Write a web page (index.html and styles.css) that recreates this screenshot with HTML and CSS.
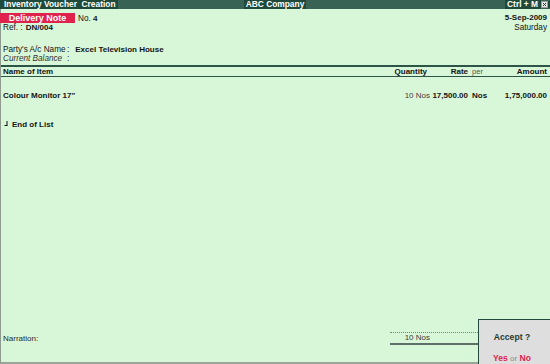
FILE: index.html
```
<!DOCTYPE html>
<html lang="en">
<head>
    <meta charset="UTF-8">
    <title>Inventory Voucher Creation</title>
    <link rel="stylesheet" href="styles.css">
</head>
<body>
    <div class="screen">
        <!-- title bar -->
        <div class="titlebar">
            <div class="tb-left"><span class="title">Inventory Voucher&nbsp; Creation</span></div>
            <span class="company">ABC Company</span>
            <div class="tb-right">
                <span class="keys">Ctrl + M</span>
                <span class="close">
                    <svg width="7" height="7" viewBox="0 0 7 7"><rect x="0.5" y="0.5" width="6" height="6" fill="#e8e8e8" stroke="#9a9a9a"/><path d="M2 2 L5 5 M5 2 L2 5" stroke="#213f33" stroke-width="1"/></svg>
                </span>
            </div>
        </div>

        <div class="voucher">
            <!-- voucher head -->
            <div class="head">
                <div class="head-left">
                    <div class="line"><span class="vtype">Delivery Note</span><span class="lbl">No.</span> <b>4</b></div>
                    <div class="line ref"><span class="lbl">Ref. :</span> <b>DN/004</b></div>
                </div>
                <div class="head-right">
                    <div class="line"><b>5-Sep-2009</b></div>
                    <div class="line"><span class="lbl">Saturday</span></div>
                </div>
            </div>

            <div class="party">
                <div class="pline"><span class="lbl plabel">Party's A/c Name</span><span class="lbl colon">:</span><b>Excel Television House</b></div>
                <div class="pline"><i class="lbl plabel">Current Balance</i><span class="lbl colon">:</span></div>
            </div>

            <!-- item table -->
            <div class="grid cols-head">
                <span>Name of Item</span>
                <span class="num qty-h">Quantity</span>
                <span class="num">Rate</span>
                <span class="per lbl">per</span>
                <span class="num">Amount</span>
            </div>

            <div class="grid item-row">
                <b>Colour Monitor 17"</b>
                <span class="num qty">10 Nos</span>
                <b class="num">17,500.00</b>
                <b class="per">Nos</b>
                <b class="num">1,75,000.00</b>
            </div>

            <div class="eol">
                <svg width="4" height="5" viewBox="0 0 4 5"><path d="M3 0 V4.5 M0.5 4.5 H3.5" stroke="#111" stroke-width="1"/></svg>
                <b>End of List</b>
            </div>

            <div class="spacer"></div>

            <div class="footer">
                <span class="narr">Narration:</span>
                <div class="total">10 Nos</div>
            </div>
        </div>

        <!-- accept prompt -->
        <div class="accept">
            <div class="ask">Accept ?</div>
            <div class="yn"><b class="red">Yes</b> <span class="or">or</span> <b class="red">No</b></div>
        </div>
    </div>
</body>
</html>
```

FILE: styles.css
```
body {
    margin: 0;
    padding: 0;
    font-family: "Liberation Sans", Arial, sans-serif;
    font-size: 8px;
    color: #141414;
}
.screen {
    position: relative;
    width: 550px;
    height: 364px;
    display: flex;
    flex-direction: column;
    background: #d8f6d8;
    overflow: hidden;
}
b {
    font-weight: bold;
    font-size: 8px;
}
.lbl {
    font-size: 8.2px;
}

/* title bar */
.titlebar {
    height: 9px;
    display: grid;
    grid-template-columns: 1fr auto 1fr;
    align-items: center;
    background-color: #1f4a3b;
    background-image: radial-gradient(#557f6f 0.6px, transparent 0.8px);
    background-size: 2px 2px;
    color: #fff;
    font-weight: bold;
    font-size: 8.4px;
    line-height: 9px;
    white-space: nowrap;
}
.titlebar span {
    background-color: #1f4a3b;
}
.title {
    padding-left: 4px;
    padding-right: 2px;
}
.company {
    padding: 0 2px;
}
.tb-right {
    display: flex;
    justify-content: flex-end;
    align-items: center;
}
.keys {
    padding: 0 3px 0 2px;
}
.close {
    display: flex;
    padding-right: 2px;
}

.voucher {
    flex: 1;
    display: flex;
    flex-direction: column;
    border-left: 1px solid #8f9a8f;
    border-bottom: 2px solid #9aa49a;
}

/* head */
.head {
    display: flex;
    justify-content: space-between;
    padding-top: 4px;
    padding-right: 3px;
}
.line {
    height: 10px;
    line-height: 10px;
    white-space: nowrap;
}
.vtype {
    display: inline-block;
    width: 75px;
    margin-left: -1px;
    margin-right: 3px;
    background: #e0234d;
    color: #fff;
    font-weight: bold;
    font-size: 9px;
    text-align: center;
}
.ref {
    padding-left: 2px;
}
.ref b {
    margin-left: 1px;
}
.head-right {
    text-align: right;
}

.party {
    margin-top: 12px;
    padding-left: 2px;
    margin-bottom: 2px;
}
.pline {
    height: 9px;
    line-height: 9px;
    white-space: nowrap;
}
.plabel {
    display: inline-block;
    width: 64px;
}
.colon {
    margin-right: 6px;
}
.party i {
    color: #333;
}

/* table */
.grid {
    display: grid;
    grid-template-columns: 1fr 60px 38px 22px 57px;
    padding: 0 3px 0 2px;
    white-space: nowrap;
}
.num {
    text-align: right;
}
.per {
    padding-left: 4px;
}
.cols-head {
    border-top: 2px solid #2c5547;
    border-bottom: 1px solid #2c5547;
    height: 9px;
    line-height: 9px;
    font-weight: bold;
}
.qty-h {
    padding-right: 3px;
}
.per.lbl {
    font-weight: normal;
    color: #555;
    font-size: 7.6px;
}
.item-row {
    margin-top: 14px;
    height: 10px;
    line-height: 10px;
}
.qty {
    color: #4a3a40;
}

.eol {
    margin-top: 19px;
    height: 10px;
    line-height: 10px;
    display: flex;
    align-items: center;
    gap: 4px;
    padding-left: 3px;
}
.eol svg {
    margin-top: -4px;
}

.spacer {
    flex: 1;
}

/* footer */
.footer {
    display: flex;
    align-items: center;
    margin-bottom: 17px;
    padding-left: 2px;
}
.narr {
    flex: 1;
    color: #2a2a2a;
}
.total {
    width: 40px;
    margin-right: 72px;
    padding-right: 48px;
    border-top: 1px dotted #7a857a;
    border-bottom: 2px solid #5d6f66;
    height: 10px;
    line-height: 10px;
    text-align: right;
    color: #3a3a3a;
}

/* accept prompt */
.accept {
    position: absolute;
    left: 478px;
    top: 319px;
    right: 0;
    bottom: 0;
    background: #dedede;
    border: 1px solid #234a3c;
    border-right: none;
    border-bottom: none;
    text-align: center;
    padding-right: 5px;
}
.ask {
    margin-top: 12px;
    font-weight: bold;
    font-size: 8.6px;
    color: #1e3a2e;
    line-height: 10px;
}
.yn {
    margin-top: 11px;
    line-height: 10px;
}
.yn b {
    font-size: 8.6px;
}
.red {
    color: #e0234d;
}
.or {
    color: #8a8a8a;
}
```
